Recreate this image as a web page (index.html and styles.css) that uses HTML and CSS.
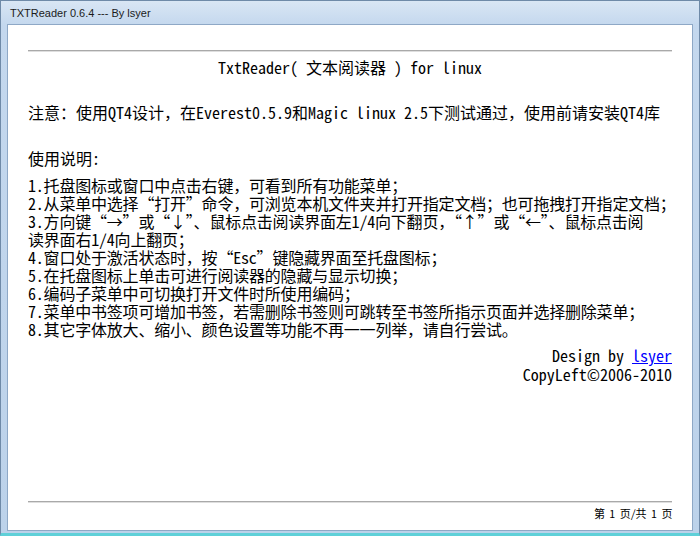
FILE: index.html
```html
<!DOCTYPE html>
<html lang="zh-CN">
<head>
<meta charset="utf-8">
<title>TXTReader</title>
<link rel="stylesheet" href="styles.css">
</head>
<body>
<div class="window">
  <div class="titlebar">TXTReader 0.6.4 --- By lsyer</div>
  <div class="client">
    <div class="rule"></div>
    <div class="title">TxtReader( 文本阅读器 ) for linux</div>
    <div class="note">注意：使用QT4设计，在Everest0.5.9和Magic linux 2.5下测试通过，使用前请安装QT4库</div>
    <div class="heading">使用说明:</div>
    <div class="list">
      <div class="line">1.托盘图标或窗口中点击右键，可看到所有功能菜单；</div>
      <div class="line">2.从菜单中选择“打开”命令，可浏览本机文件夹并打开指定文档；也可拖拽打开指定文档；</div>
      <div class="line">3.方向键“→”或“↓”、鼠标点击阅读界面左1/4向下翻页，“↑”或“←”、鼠标点击阅</div>
      <div class="line">读界面右1/4向上翻页；</div>
      <div class="line">4.窗口处于激活状态时，按“Esc”键隐藏界面至托盘图标；</div>
      <div class="line">5.在托盘图标上单击可进行阅读器的隐藏与显示切换；</div>
      <div class="line">6.编码子菜单中可切换打开文件时所使用编码；</div>
      <div class="line">7.菜单中书签项可增加书签，若需删除书签则可跳转至书签所指示页面并选择删除菜单；</div>
      <div class="line">8.其它字体放大、缩小、颜色设置等功能不再一一列举，请自行尝试。</div>
    </div>
    <div class="sign">
      <div>Design by <a class="link" href="#">lsyer</a></div>
      <div>CopyLeft©2006-2010</div>
    </div>
    <div class="footer">
      <div class="rule"></div>
      <div class="page">第 1 页/共 1 页</div>
    </div>
  </div>
</div>
</body>
</html>
```

FILE: styles.css
```css
html, body {
  margin: 0;
  padding: 0;
  background: #ffffff;
}

.window {
  width: 700px;
  height: 536px;
  box-sizing: border-box;
  display: flex;
  flex-direction: column;
  background: linear-gradient(to bottom, #d9e6f4 0px, #c4d8ee 24px, #bcd2ea 100%);
  border: 1px solid #6f8aa8;
  border-bottom: 3px solid #5fd0d8;
}

.titlebar {
  height: 23px;
  flex: none;
  display: flex;
  align-items: center;
  padding-left: 9px;
  font-family: "Liberation Sans", "Noto Sans", sans-serif;
  font-size: 11px;
  color: #1b1b1b;
}

.client {
  flex: 1;
  margin: 0 6px 2px 6px;
  background: #ffffff;
  border: 1px solid #8ea8c6;
  display: flex;
  flex-direction: column;
  padding: 0 20px;
  font-family: "Noto Sans Mono CJK SC", "Noto Sans CJK SC", monospace;
  font-size: 16px;
  line-height: 18px;
  color: #000000;
}

.rule {
  height: 0;
  border-top: 1px solid #a9a9a9;
  border-bottom: 1px solid #dedede;
}

.client > .rule {
  margin-top: 25px;
}

.title {
  margin-top: 6px;
  text-align: center;
}

.note {
  margin-top: 27px;
  white-space: nowrap;
}

.heading {
  margin-top: 28px;
}

.list {
  margin-top: 9px;
}

.line {
  white-space: nowrap;
  letter-spacing: -0.2px;
}

.sign {
  margin-top: 8px;
  text-align: right;
  line-height: 19px;
}

.link {
  color: #0000ff;
  text-decoration: underline;
}

.footer {
  margin-top: auto;
  padding-bottom: 10px;
}

.footer > .rule {
  margin-bottom: 1px;
}

.page {
  margin-top: 3px;
  text-align: right;
  font-size: 11px;
  letter-spacing: -0.4px;
  line-height: 14px;
}
```
